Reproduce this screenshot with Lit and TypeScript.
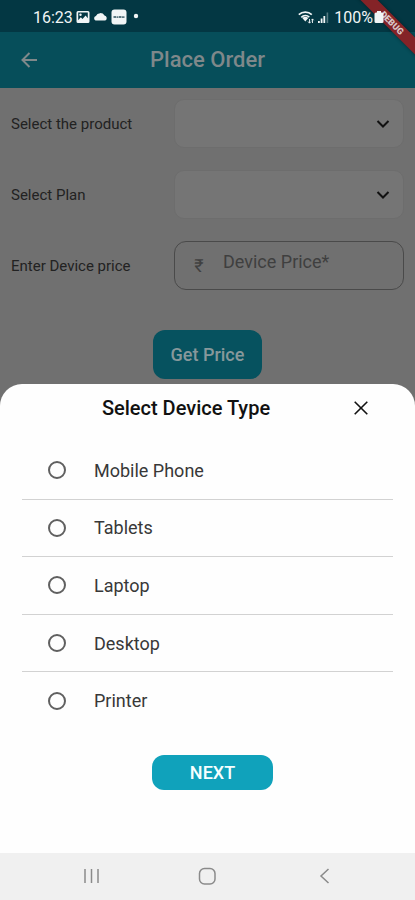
import { LitElement, html, css, svg } from "lit";
import { customElement, state } from "lit/decorators.js";

const DEVICE_TYPES = ["Mobile Phone", "Tablets", "Laptop", "Desktop", "Printer"];

@customElement("order-status-bar")
class OrderStatusBar extends LitElement {
  static styles = css`
    :host {
      display: block;
      position: relative;
      overflow: visible;
      background: #033743;
      color: #f1f5f6;
      font-size: 16px;
    }
    .bar {
      position: relative;
      z-index: 2;
      display: flex;
      align-items: center;
      justify-content: space-between;
      height: 32px;
      padding: 2px 31px 0 33px;
      box-sizing: border-box;
    }
    .group {
      display: flex;
      align-items: center;
      gap: 3px;
    }
    .right {
      gap: 2px;
    }
    .percent {
      margin: 0 -1px 0 3px;
    }
    .clip {
      position: absolute;
      z-index: 1;
      top: 0;
      right: 0;
      width: 64px;
      height: 64px;
      overflow: hidden;
    }
    .banner {
      position: absolute;
      top: 17px;
      right: -27px;
      width: 100px;
      height: 12px;
      background: #842327;
      color: #d9c6c8;
      font-size: 9px;
      line-height: 12px;
      font-weight: 900;
      text-align: center;
      transform: rotate(45deg);
      box-shadow: 0 0 4px rgba(0, 0, 0, 0.4);
    }
    svg {
      display: block;
      fill: currentColor;
    }
  `;

  render() {
    return html`
      <div class="bar">
        <div class="group">
          <span>16:23</span>
          <svg width="14" height="14" viewBox="0 0 14 14">
            <path fill-rule="evenodd" d="M2 1h10a1.500 1.500 0 0 1 1.500 1.500v9A1.500 1.500 0 0 1 12 13H2A1.500 1.500 0 0 1 .5 11.500v-9A1.500 1.500 0 0 1 2 1zM2.200 2.600v7.600l2.600-3 1.700 1.700L9.600 5.600l2.200 2.600V2.600z" />
            <circle cx="4.500" cy="4.800" r="1.200" />
          </svg>
          <svg width="15" height="14" viewBox="0 0 15 14">
            <path d="M2.500 10.500a2.400 2.400 0 0 1 .4-4.500 4.800 4.800 0 0 1 8.600-.4A2.600 2.600 0 0 1 12.300 10.500z" />
          </svg>
          <svg width="16" height="16" viewBox="0 0 16 16">
            <rect x="0.500" y="0.500" width="15" height="15" rx="3" />
            <path d="M2.500 7h2.500v2H2.500zM5.500 7.200h2v1.800h-2zM8 7h2.500v2H8zM11 7.300h2.500v1.700H11z" fill="#5b7780" />
          </svg>
          <svg width="16" height="14" viewBox="0 0 16 14"><circle cx="6" cy="6" r="2.200" /></svg>
        </div>
        <div class="group right">
          <svg width="17" height="14" viewBox="0 0 17 14">
            <path d="M.8 4.600a9.500 9.500 0 0 1 13 0M3.300 7.300a6 6 0 0 1 8-.1" fill="none" stroke="currentColor" stroke-width="1.700" />
            <path d="M4.300 8a4.700 4.700 0 0 1 6 0L7.300 11.600z" />
            <path d="M11.500 9v4M10 11.500l1.500 1.700L13 11.500M14.500 13V9M13.300 10.300l1.200-1.400 1.200 1.400" fill="none" stroke="currentColor" stroke-width="0.900" />
          </svg>
          <svg width="12" height="14" viewBox="0 0 12 14">
            <path d="M1 11h1.800v2H1zM3.700 8.500h1.800V13H3.700zM6.400 6h1.800v7H6.400z" />
            <path d="M9.600 2.500h1.600V13H9.600z" opacity="0.350" />
          </svg>
          <span class="percent">100%</span>
          <svg width="10" height="14" viewBox="0 0 10 14">
            <path d="M3 1h4v1.500h1A1.500 1.500 0 0 1 9.500 4v7.500A1.500 1.500 0 0 1 8 13H2A1.500 1.500 0 0 1 .5 11.500V4A1.500 1.500 0 0 1 2 2.500h1z" />
          </svg>
        </div>
      </div>
      <div class="clip"><div class="banner">DEBUG</div></div>
    `;
  }
}

@customElement("order-form")
class OrderForm extends LitElement {
  static styles = css`
    :host {
      display: block;
      color: #222;
    }
    .header {
      display: grid;
      grid-template-columns: 58px 1fr 58px;
      align-items: center;
      height: 56px;
      background: #064e5a;
      color: #7f888a;
    }
    h1 {
      margin: 0;
      font-size: 22px;
      line-height: 28px;
      font-weight: 500;
      text-align: center;
    }
    button {
      border: 0;
      font: inherit;
      color: inherit;
      cursor: pointer;
    }
    .back {
      display: grid;
      place-items: center;
      height: 56px;
      padding: 0;
      background: none;
    }
    form {
      display: flex;
      flex-direction: column;
      gap: 22px;
      padding: 11px 11px 5px;
    }
    .row {
      display: grid;
      grid-template-columns: 163px minmax(0, 1fr);
      align-items: center;
      font-size: 15px;
    }
    .field {
      position: relative;
      display: flex;
      align-items: center;
      height: 49px;
      box-sizing: border-box;
      border: 1px solid #6d6d6d;
      border-radius: 10px;
      background: #757575;
    }
    select {
      appearance: none;
      flex: 1;
      align-self: stretch;
      border: 0;
      background: none;
      font: inherit;
    }
    .chevron {
      position: absolute;
      right: 13px;
      pointer-events: none;
      color: #111;
    }
    .outlined {
      border: 1px solid #4a4a4a;
      border-radius: 12px;
      background: none;
      color: #404040;
    }
    .rupee {
      width: 48px;
      text-align: center;
      font-size: 18px;
    }
    input {
      flex: 1;
      min-width: 0;
      padding: 0 0 8px;
      border: 0;
      background: none;
      color: inherit;
      font: inherit;
      font-size: 18px;
      outline: 0;
    }
    input::placeholder {
      color: #3f3f3f;
      opacity: 1;
    }
    .submit {
      align-self: center;
      height: 49px;
      margin-top: 18px;
      padding: 0 18px;
      border-radius: 12px;
      background: #06525f;
      color: #87989b;
      font-size: 18px;
      font-weight: 500;
    }
    svg {
      display: block;
      fill: none;
      stroke: currentColor;
      stroke-width: 2;
    }
  `;

  private picker(id: string, label: string) {
    return html`
      <div class="row">
        <label for=${id}>${label}</label>
        <div class="field">
          <select id=${id}></select>
          <svg class="chevron" width="14" height="10" viewBox="0 0 14 10"><path d="M1.500 2L7 7.500 12.500 2" /></svg>
        </div>
      </div>
    `;
  }

  render() {
    return html`
      <header class="header">
        <button class="back" aria-label="Back">
          <svg width="18" height="18" viewBox="0 0 18 18"><path d="M17 9H3M9.500 2L2.500 9l7 7" /></svg>
        </button>
        <h1>Place Order</h1>
      </header>
      <form @submit=${(e: Event) => e.preventDefault()}>
        ${this.picker("product", "Select the product")}
        ${this.picker("plan", "Select Plan")}
        <div class="row">
          <label for="price">Enter Device price</label>
          <div class="field outlined">
            <span class="rupee">₹</span>
            <input id="price" type="text" placeholder="Device Price*" />
          </div>
        </div>
        <button class="submit">Get Price</button>
      </form>
    `;
  }
}

@customElement("device-sheet")
class DeviceSheet extends LitElement {
  static styles = css`
    :host {
      display: block;
      border-radius: 22px 22px 0 0;
      background: #fefefe;
      color: #111;
    }
    .top {
      display: grid;
      grid-template-columns: 48px 1fr 74px;
      align-items: center;
      height: 48px;
      padding-right: 17px;
    }
    h2 {
      margin: 0;
      font-size: 20px;
      line-height: 24px;
      font-weight: 500;
      text-align: center;
      white-space: nowrap;
    }
    button {
      border: 0;
      padding: 0;
      font: inherit;
      cursor: pointer;
    }
    .close {
      display: grid;
      place-items: center;
      height: 48px;
      background: none;
      color: #111;
    }
    .list {
      display: flex;
      flex-direction: column;
      height: 288px;
      margin: 10px 22px 0;
    }
    label {
      display: flex;
      flex: 1;
      align-items: center;
      gap: 28px;
      padding-left: 26px;
      border-bottom: 1px solid #d2d2d2;
      color: #383838;
      font-size: 18px;
    }
    label:last-child {
      border-bottom-color: transparent;
    }
    input {
      appearance: none;
      width: 18px;
      height: 18px;
      box-sizing: border-box;
      margin: 0;
      border: 2px solid #606060;
      border-radius: 50%;
    }
    input:checked {
      border: 5px solid #10a2bb;
    }
    .actions {
      display: flex;
      justify-content: center;
      padding: 25px 0 32px 10px;
    }
    .next {
      width: 121px;
      height: 35px;
      border-radius: 12px;
      background: #10a2bb;
      color: #f6ffff;
      font-size: 18px;
      font-weight: 500;
    }
    svg {
      display: block;
      fill: none;
      stroke: currentColor;
      stroke-width: 1.6;
    }
  `;

  @state() private selected = "";

  render() {
    return html`
      <div class="top">
        <span></span>
        <h2>Select Device Type</h2>
        <button class="close" aria-label="Close">
          <svg width="14" height="14" viewBox="0 0 14 14"><path d="M.7.7l12.600 12.600M13.300.7L.7 13.300" /></svg>
        </button>
      </div>
      <div class="list" role="radiogroup" aria-label="Select Device Type">
        ${DEVICE_TYPES.map(
          (name) => html`
            <label>
              <input type="radio" name="device" .checked=${this.selected === name} @change=${() => (this.selected = name)} />
              <span>${name}</span>
            </label>
          `
        )}
      </div>
      <div class="actions"><button class="next">NEXT</button></div>
    `;
  }
}

@customElement("app-root")
class AppRoot extends LitElement {
  static styles = css`
    :host {
      display: flex;
      flex-direction: column;
      min-height: 100vh;
      background: #707070;
      font-family: Roboto, "Liberation Sans", sans-serif;
    }
    device-sheet {
      flex: 1;
    }
    nav {
      display: grid;
      grid-template-columns: 1fr 1fr 1fr;
      gap: 20px;
      height: 47px;
      padding: 0 43px;
      background: #f0f0f0;
      color: #8a8a8a;
    }
    button {
      display: grid;
      place-items: center;
      padding: 0 0 2px;
      border: 0;
      background: none;
      color: inherit;
    }
    svg {
      display: block;
      fill: none;
      stroke: currentColor;
      stroke-width: 1.5;
    }
  `;

  private navButton(label: string, shape: unknown) {
    return html`<button aria-label=${label}><svg width="18" height="18" viewBox="0 0 18 18">${shape}</svg></button>`;
  }

  render() {
    return html`
      <order-status-bar></order-status-bar>
      <order-form></order-form>
      <device-sheet></device-sheet>
      <nav>
        ${this.navButton("Recent apps", svg`<path d="M3 2v14M9.500 2v14M16 2v14" />`)}
        ${this.navButton("Home", svg`<rect x="1.500" y="1.500" width="15.500" height="15.500" rx="5" />`)}
        ${this.navButton("Back", svg`<path d="M13.500 2L6 9l7.500 7" />`)}
      </nav>
    `;
  }
}
